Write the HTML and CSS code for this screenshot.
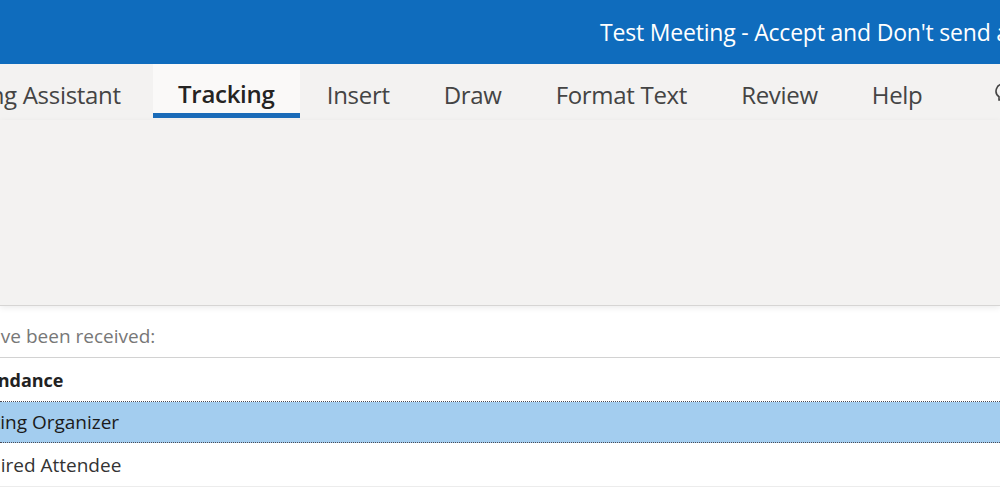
FILE: index.html
```html
<!DOCTYPE html>
<html>
<head>
<meta charset="utf-8">
<link rel="stylesheet" href="styles.css">
</head>
<body>
<div class="window">
  <header class="titlebar">
    <span class="title">Test Meeting - Accept and Don't send a response - Meeting</span>
  </header>
  <nav class="tabs">
    <div class="tab first">Meeting Assistant</div>
    <div class="tab active">Tracking</div>
    <div class="tab">Insert</div>
    <div class="tab">Draw</div>
    <div class="tab">Format Text</div>
    <div class="tab">Review</div>
    <div class="tab">Help</div>
    <div class="tab tell">
      <svg width="20" height="24" viewBox="0 0 20 24"><path d="M10 2a7 7 0 0 0-4 12.7V18h8v-3.3A7 7 0 0 0 10 2z" fill="none" stroke="#444" stroke-width="1.6"/><path d="M7 21h6" stroke="#444" stroke-width="1.6"/></svg>
      <span>Tell me what you want to do</span>
    </div>
  </nav>
  <section class="ribbon"></section>
  <main class="content">
    <div class="intro"><span class="shift">The following responses to this meeting have been received:</span></div>
    <div class="table">
      <div class="row head"><span class="cell">Attendance</span></div>
      <div class="row selected"><span class="cell">Meeting Organizer</span></div>
      <div class="row"><span class="cell">Required Attendee</span></div>
    </div>
  </main>
</div>
</body>
</html>
```
FILE: styles.css
```css
html, body {
  margin: 0;
  padding: 0;
  background: #ffffff;
  overflow: hidden;
}
.window {
  width: 1000px;
  height: 500px;
  overflow: hidden;
  font-family: "Open Sans", "Noto Sans", sans-serif;
}
.titlebar {
  height: 64px;
  background: #0f6cbd;
  display: flex;
  align-items: center;
  padding-left: 600px;
  white-space: nowrap;
  overflow: hidden;
}
.title {
  color: #ffffff;
  font-size: 23px;
  letter-spacing: -0.2px;
  margin-top: -1px;
}
.tabs {
  height: 56px;
  background: #f3f2f1;
  display: flex;
  white-space: nowrap;
  overflow: hidden;
}
.tab {
  flex: none;
  display: flex;
  align-items: center;
  justify-content: center;
  font-size: 24px;
  color: #444444;
  padding: 6px 27px 0;
  height: 54px;
  box-sizing: border-box;
  letter-spacing: -0.3px;
}
.tab.first {
  margin-left: -98px;
  padding-left: 26px;
  padding-right: 32px;
}
.tab.active {
  width: 147px;
  padding: 9px 0 0;
  background: #faf9f8;
  color: #252423;
  font-weight: 600;
  border-bottom: 5px solid #1a6bb8;
  height: 54px;
}
.tab.tell {
  padding-left: 44px;
  gap: 8px;
}
.ribbon {
  height: 185px;
  background: #f3f2f1;
  border-bottom: 1px solid #d6d5d4;
  box-shadow: 0 2px 6px rgba(0,0,0,0.08);
}
.content {
  font-size: 19px;
  color: #333333;
}
.intro {
  height: 52px;
  display: flex;
  align-items: center;
  color: #777777;
  white-space: nowrap;
  border-bottom: 1px solid #d2d2d2;
  padding-top: 8px;
  box-sizing: border-box;
}
.shift {
  margin-left: -378px;
}
.table {
  display: flex;
  flex-direction: column;
}
.row {
  height: 43px;
  display: flex;
  align-items: center;
  white-space: nowrap;
  border-bottom: 1px solid #ececec;
}
.row.head {
  font-weight: 700;
  font-size: 18px;
  color: #222222;
  height: 43px;
  border-bottom: 1px dotted #4a4a55;
}
.row.selected {
  background: #a3cdef;
  height: 40px;
  color: #1b1b1b;
  border-bottom: 1px dotted #4a4a55;
}
.cell {
  margin-left: -45px;
}
.row.head .cell {
  margin-left: -41px;
}
```
